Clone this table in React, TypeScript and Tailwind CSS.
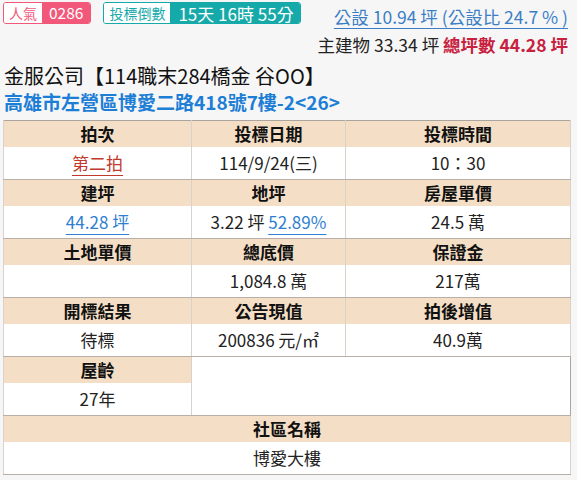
import React from 'react';

const font = 'font-["Noto_Sans_CJK_TC","Noto_Sans",sans-serif]';

function Head({ children, span }: { children: React.ReactNode; span?: number }) {
  return (
    <th colSpan={span} className="h-[26px] p-0 bg-[#f4dfc6] border-x border-[#d9d2ca] font-bold text-[17px] leading-none text-[#111] text-center">
      {children}
    </th>
  );
}

function Cell({ children, span }: { children?: React.ReactNode; span?: number }) {
  return (
    <td colSpan={span} className="h-[33px] p-0 bg-white border-x border-b border-[#d9d2ca] border-b-[#b8b0a8] text-[17px] leading-none text-[#222] text-center">
      {children}
    </td>
  );
}

export default function App() {
  return (
    <div className={`w-[577px] h-[480px] bg-[#f6f6f6] overflow-hidden ${font}`}>
      <div className="flex justify-between h-[60px]">
        <div className="flex items-start gap-3 pl-[3px] pt-[2px]">
          <div className="flex h-[22px] rounded-[3px] border border-[#f2587a] leading-none">
            <span className="flex items-center px-[5px] rounded-l-[2px] bg-white text-[#f2587a] text-[14px]">人氣</span>
            <span className="flex items-center px-[7px] rounded-r-[2px] bg-[#f2587a] text-white text-[15.5px]">0286</span>
          </div>
          <div className="flex h-[22px] rounded-[3px] border border-[#16a9a9] leading-none">
            <span className="flex items-center px-[5px] rounded-l-[2px] bg-white text-[#16a9a9] text-[14px]">投標倒數</span>
            <span className="flex items-center pl-[8px] pr-[6px] rounded-r-[2px] bg-[#16a9a9] text-white text-[17px]">15天 16時 55分</span>
          </div>
        </div>
        <div className="flex flex-col items-end pr-[9px] pt-[8px] text-[17.5px] leading-none">
          <span className="text-[#3b7ec6] underline underline-offset-[4px] decoration-1">公設 10.94 坪 (公設比 24.7 % )</span>
          <span className="mt-[10px] text-[#222]">
            主建物 33.34 坪 <span className="font-bold text-[#c8213f]">總坪數 44.28 坪</span>
          </span>
        </div>
      </div>
      <div className="pl-[4px] pt-[3px] text-[20px] leading-[26px] text-[#111]">金服公司【114職末284橋金 谷OO】</div>
      <div className="pl-[4px] text-[19px] leading-[26px] font-bold text-[#1d7ed6]">高雄市左營區博愛二路418號7樓-2&lt;26&gt;</div>
      <table className="ml-[3px] mt-[5px] w-[567px] border-collapse border border-[#aaa59f] table-fixed">
        <colgroup>
          <col className="w-[188px]" />
          <col className="w-[154px]" />
          <col className="w-[225px]" />
        </colgroup>
        <tbody>
          <tr>
            <Head>拍次</Head>
            <Head>投標日期</Head>
            <Head>投標時間</Head>
          </tr>
          <tr>
            <Cell>
              <span className="text-[#c0392b] underline underline-offset-[5px] decoration-1">第二拍</span>
            </Cell>
            <Cell>114/9/24(三)</Cell>
            <Cell>10：30</Cell>
          </tr>
          <tr>
            <Head>建坪</Head>
            <Head>地坪</Head>
            <Head>房屋單價</Head>
          </tr>
          <tr>
            <Cell>
              <span className="text-[#2f7fd0] underline underline-offset-[5px] decoration-1">44.28 坪</span>
            </Cell>
            <Cell>
              3.22 坪 <span className="text-[#2f7fd0] underline underline-offset-[5px] decoration-1">52.89%</span>
            </Cell>
            <Cell>24.5 萬</Cell>
          </tr>
          <tr>
            <Head>土地單價</Head>
            <Head>總底價</Head>
            <Head>保證金</Head>
          </tr>
          <tr>
            <Cell />
            <Cell>1,084.8 萬</Cell>
            <Cell>217萬</Cell>
          </tr>
          <tr>
            <Head>開標結果</Head>
            <Head>公告現值</Head>
            <Head>拍後增值</Head>
          </tr>
          <tr>
            <Cell>待標</Cell>
            <Cell>200836 元/㎡</Cell>
            <Cell>40.9萬</Cell>
          </tr>
          <tr>
            <Head>屋齡</Head>
            <td rowSpan={2} colSpan={2} className="p-0 bg-white border-l border-b border-[#d9d2ca] border-b-[#b8b0a8]" />
          </tr>
          <tr>
            <Cell>27年</Cell>
          </tr>
          <tr>
            <Head span={3}>社區名稱</Head>
          </tr>
          <tr>
            <Cell span={3}>博愛大樓</Cell>
          </tr>
        </tbody>
      </table>
    </div>
  );
}
